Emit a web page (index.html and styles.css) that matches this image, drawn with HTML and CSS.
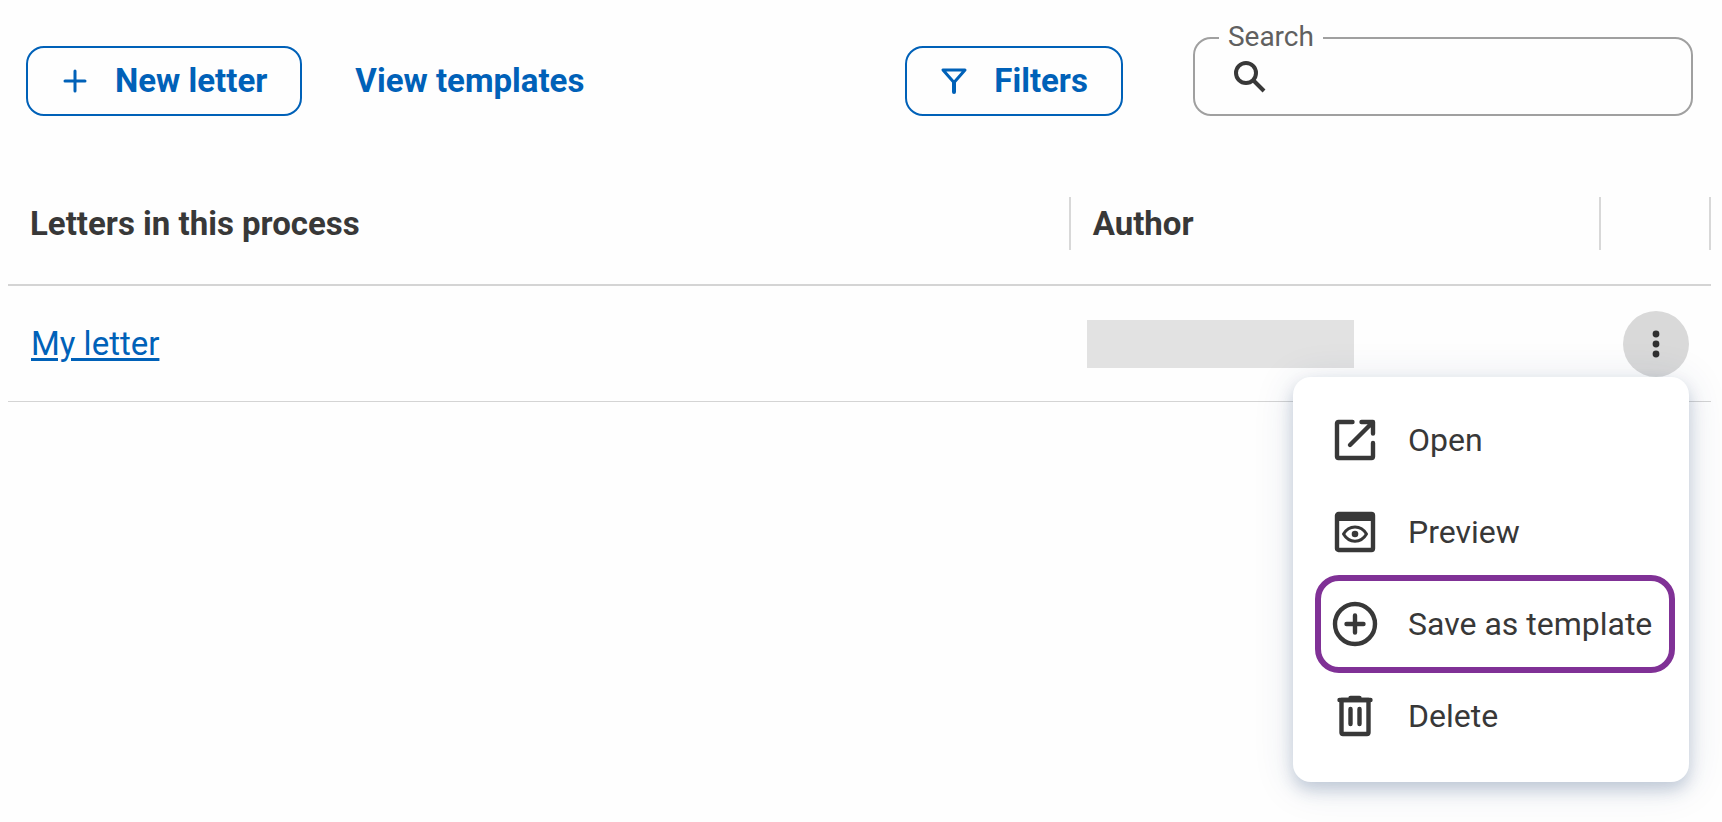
FILE: index.html
```html
<!DOCTYPE html>
<html lang="en">

<head>
    <meta charset="UTF-8">
    <meta name="viewport" content="width=device-width, initial-scale=1.0">
    <title>Letters</title>
    <link rel="stylesheet" href="styles.css">
</head>

<body>
    <div class="toolbar">
        <button class="btn" type="button">
            <svg class="btn-icon" viewBox="0 0 28 28" aria-hidden="true">
                <path d="M14 4v20M4 14h20" stroke-linecap="round" />
            </svg>
            New letter
        </button>
        <button class="btn btn-text" type="button">View templates</button>
        <button class="btn btn-filter" type="button">
            <svg class="btn-icon" viewBox="0 0 28 28" aria-hidden="true">
                <path d="M3 3h22L14 15.500z" stroke-linejoin="round" />
                <path class="stem" d="M14 15v10" stroke-linecap="round" />
            </svg>
            Filters
        </button>
        <div class="search">
            <label class="search-label" for="search_input">Search</label>
            <svg class="search-icon" viewBox="0 0 32 32" aria-hidden="true">
                <circle cx="12" cy="12" r="10" />
                <path d="M19.500 19.500L30 30" />
            </svg>
            <input id="search_input" class="search-input" type="text">
        </div>
    </div>

    <table class="letters">
        <thead>
            <tr>
                <th class="col-name"><div class="head">Letters in this process</div></th>
                <th class="col-author"><div class="head">Author</div></th>
                <th class="col-action"><div class="head"></div></th>
            </tr>
        </thead>
        <tbody>
            <tr>
                <td><a class="letter-link" href="#">My letter</a></td>
                <td><div class="author"></div></td>
                <td class="action">
                    <div class="action-wrap">
                        <button class="more" type="button" aria-label="More actions">
                            <svg viewBox="0 0 32 32" aria-hidden="true">
                                <circle cx="16" cy="6" r="3.400" />
                                <circle cx="16" cy="16" r="3.400" />
                                <circle cx="16" cy="26" r="3.400" />
                            </svg>
                        </button>
                        <div class="menu">
                            <button class="menu-item" type="button">
                                <svg viewBox="0 0 48 48" aria-hidden="true">
                                    <path d="M21.500 6H7.500Q6 6 6 7.500V40.500Q6 42 7.500 42H40.500Q42 42 42 40.500V27" />
                                    <path d="M30.500 6H42V17.500M19 29L41 7" />
                                </svg>
                                Open
                            </button>
                            <button class="menu-item" type="button">
                                <svg viewBox="0 0 48 48" aria-hidden="true">
                                    <rect x="6" y="6" width="36" height="36" rx="1.500" />
                                    <path class="fill" d="M5 6h38v7H5z" />
                                    <path class="thin" d="M12.500 26C18 16.500 30 16.500 35.500 26C30 35.500 18 35.500 12.500 26z" />
                                    <circle class="fill" cx="24" cy="26" r="3.300" />
                                </svg>
                                Preview
                            </button>
                            <button class="menu-item marked" type="button">
                                <svg viewBox="0 0 48 48" aria-hidden="true">
                                    <circle cx="24" cy="24" r="20" />
                                    <path d="M24 15.500v17M15.500 24h17" />
                                </svg>
                                Save as template
                            </button>
                            <button class="menu-item" type="button">
                                <svg viewBox="0 0 48 48" aria-hidden="true">
                                    <path d="M10.500 40.500V8H37.500V40.500Q37.500 42 36 42H12Q10.500 42 10.500 40.500z" />
                                    <path d="M8.500 8h31M19.500 6h9M19.500 17v15M28.500 17v15" />
                                </svg>
                                Delete
                            </button>
                        </div>
                    </div>
                </td>
            </tr>
        </tbody>
    </table>
</body>

</html>
```
FILE: styles.css
```css
* {
    box-sizing: border-box;
}

body {
    min-height: 100vh;
    margin: 0;
    background: #fefefe;
    color: #383838;
    font-family: Roboto, "Liberation Sans", sans-serif;
    font-size: 33px;
    line-height: 40px;
}

button,
input {
    font: inherit;
    color: inherit;
}

svg {
    flex: none;
    fill: none;
    stroke: currentColor;
}

/* toolbar */

.toolbar {
    display: flex;
    align-items: flex-end;
    padding: 37px 29px 0 26px;
}

.btn {
    display: flex;
    align-items: center;
    gap: 26px;
    height: 70px;
    padding: 0 33px;
    border: 2px solid #0061b8;
    border-radius: 18px;
    background: transparent;
    color: #0061b8;
    font-weight: 700;
    white-space: nowrap;
    cursor: pointer;
}

.btn-icon {
    width: 28px;
    height: 28px;
    stroke-width: 3;
}

.btn-icon .stem {
    stroke-width: 4;
}

.btn-text {
    margin-left: 18px;
    border-color: transparent;
}

.btn-filter {
    margin-left: auto;
}

.search {
    position: relative;
    display: flex;
    gap: 12px;
    width: 30%;
    min-width: 260px;
    height: 79px;
    margin-left: 70px;
    padding: 22px 24px 14px 39px;
    border: 2px solid #a0a0a0;
    border-radius: 18px;
}

.search-label {
    position: absolute;
    top: -18px;
    left: 24px;
    padding: 0 9px;
    background: #fefefe;
    color: #606060;
    font-size: 28px;
    line-height: 32px;
}

.search-icon {
    width: 32px;
    height: 32px;
    stroke-width: 4;
}

.search-input {
    flex: 1;
    min-width: 0;
    padding: 0;
    border: 0;
    outline: none;
    background: transparent;
}

/* table */

.letters {
    width: calc(100% - 19px);
    margin: 57px 11px 0 8px;
    border-collapse: separate;
    border-spacing: 0;
    table-layout: fixed;
}

.letters th {
    height: 113px;
    padding: 0 0 11px;
    border-bottom: 2px solid #d4d4d4;
    text-align: left;
}

.letters td {
    height: 116px;
    padding: 0 0 0 23px;
    border-bottom: 1px solid #d4d4d4;
}

.letters td:nth-child(2) {
    padding-left: 16px;
}

.col-name {
    width: 62.4%;
}

.col-action {
    width: 110px;
}

.head {
    height: 53px;
    padding-left: 22px;
    border-right: 2px solid #d8d8d8;
    line-height: 53px;
}

.letter-link {
    color: #0061b8;
    text-decoration-thickness: 3px;
    text-underline-offset: 3px;
}

.author {
    width: 267px;
    max-width: 100%;
    height: 48px;
    background: #e2e2e2;
}

/* row actions */

.letters td.action {
    padding: 0 22px 0 0;
}

.action-wrap {
    position: relative;
    display: flex;
    justify-content: flex-end;
}

.more {
    width: 66px;
    height: 66px;
    padding: 17px;
    border: 0;
    border-radius: 50%;
    background: #d9d9d9;
    cursor: pointer;
}

.more svg {
    display: block;
    width: 32px;
    height: 32px;
    fill: #303030;
    stroke: none;
}

.menu {
    position: absolute;
    top: 100%;
    right: 0;
    z-index: 1;
    width: 396px;
    padding: 17px 14px 20px 22px;
    border-radius: 18px;
    background: #fff;
    box-shadow: 0 8px 16px rgba(30, 70, 120, 0.22), 0 4px 40px rgba(40, 60, 110, 0.13);
    font-size: 32px;
}

.menu-item {
    display: flex;
    align-items: center;
    gap: 29px;
    width: 100%;
    height: 92px;
    padding: 0 16px;
    border: 0;
    background: transparent;
    white-space: nowrap;
    cursor: pointer;
}

.menu-item svg {
    width: 48px;
    height: 48px;
    stroke-width: 4.4;
    stroke-linecap: round;
    stroke-linejoin: round;
}

.menu-item .thin {
    stroke-width: 3;
}

.menu-item .fill {
    fill: currentColor;
    stroke: none;
}

/* a little taller than the other rows, without moving them */
.marked {
    height: 98px;
    margin: -3px 0;
    padding: 0 10px;
    border: 6px solid #803196;
    border-radius: 24px;
}
```
